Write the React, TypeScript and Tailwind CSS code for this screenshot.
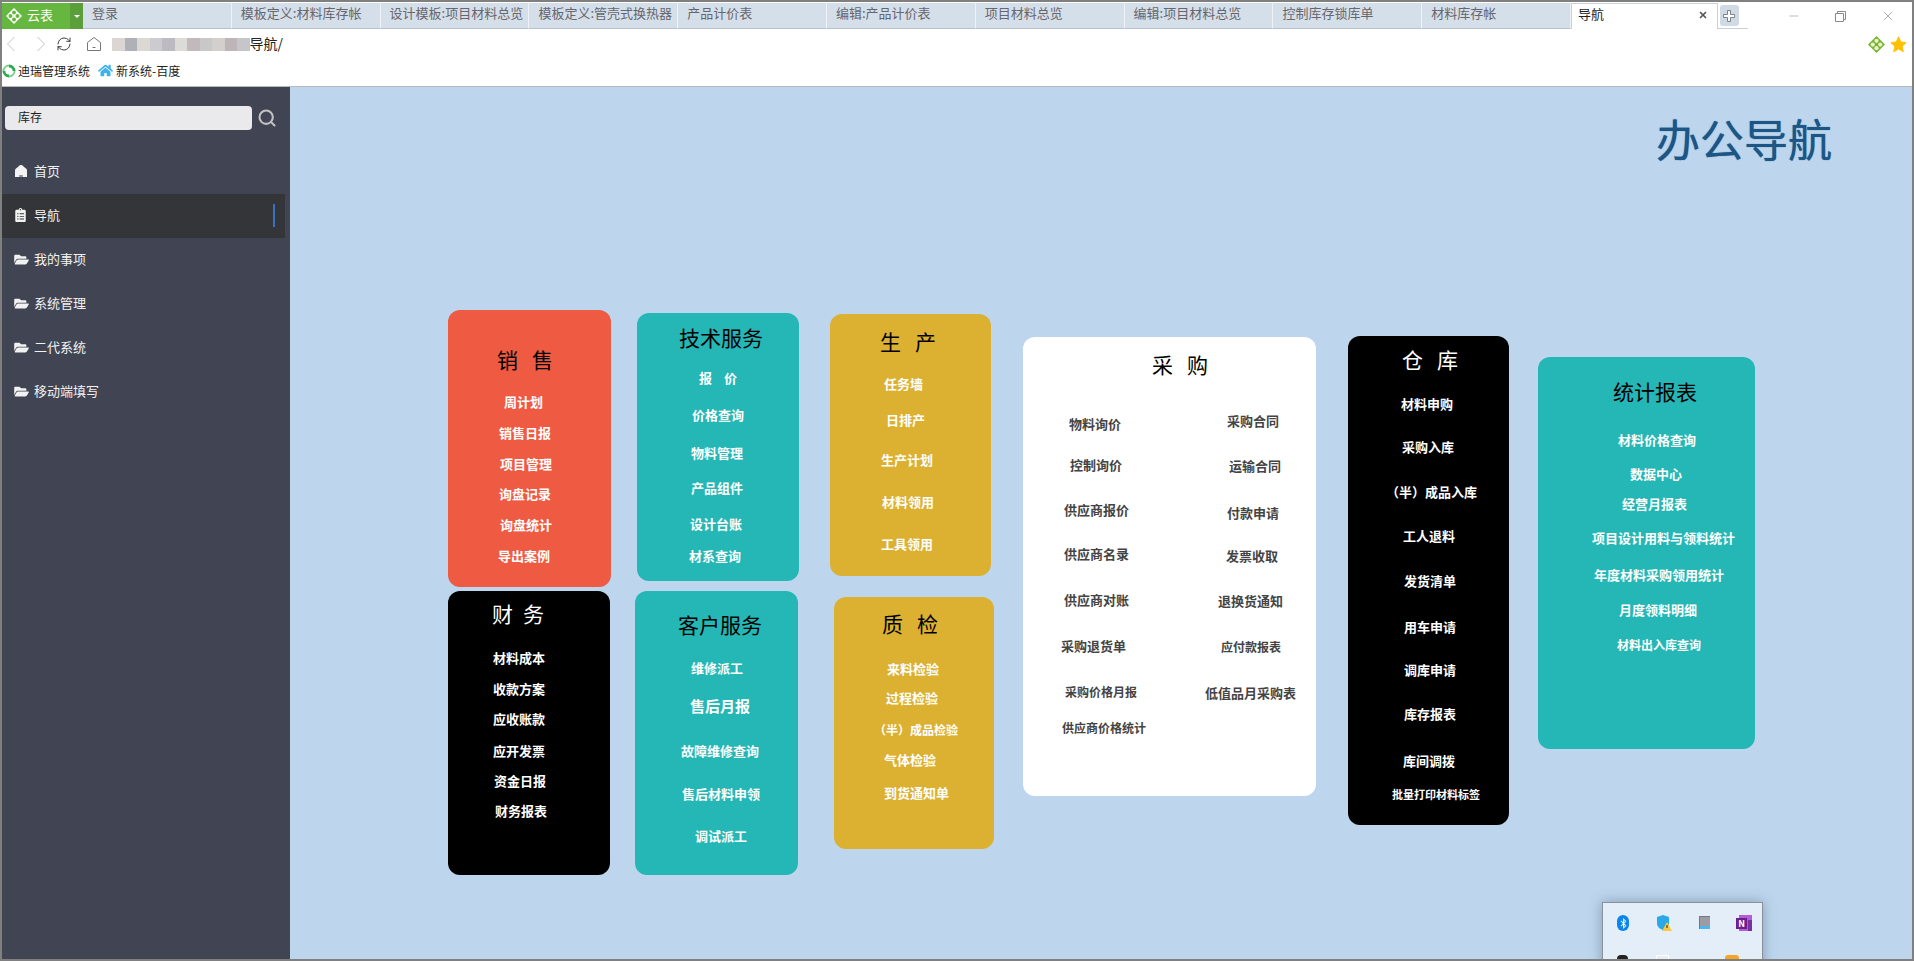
import React from "react";
import { Minus, RefreshCw, Search, X } from "lucide-react";
import { FaClipboardList, FaFolderOpen, FaHome, FaBluetoothB } from "react-icons/fa";

type Item = { t: string; c: string };

const tabs = [
  "登录",
  "模板定义:材料库存帐",
  "设计模板:项目材料总览",
  "模板定义:管壳式换热器",
  "产品计价表",
  "编辑:产品计价表",
  "项目材料总览",
  "编辑:项目材料总览",
  "控制库存锁库单",
  "材料库存帐",
];

const mosaic = [
  "bg-[#dbd6d3]",
  "bg-[#b0b0b8]",
  "bg-[#dcd8d3]",
  "bg-[#cbcbd0]",
  "bg-[#bdbac2]",
  "bg-[#dddbd8]",
  "bg-[#c2b9bd]",
  "bg-[#c9c8c8]",
  "bg-[#d2cfcd]",
  "bg-[#bdb5b8]",
  "bg-[#c6c6ca]",
];

const salesItems: Item[] = [
  { t: "周计划", c: "mt-[17px] ml-[56px]" },
  { t: "销售日报", c: "mt-[11px] ml-[51px]" },
  { t: "项目管理", c: "mt-[11px] ml-[52px]" },
  { t: "询盘记录", c: "mt-[10px] ml-[51px]" },
  { t: "询盘统计", c: "mt-[11px] ml-[52px]" },
  { t: "导出案例", c: "mt-[11px] ml-[50px]" },
];

const financeItems: Item[] = [
  { t: "材料成本", c: "mt-[19px] ml-[45px]" },
  { t: "收款方案", c: "mt-[11px] ml-[45px]" },
  { t: "应收账款", c: "mt-[10px] ml-[45px]" },
  { t: "应开发票", c: "mt-[12px] ml-[45px]" },
  { t: "资金日报", c: "mt-[10px] ml-[46px]" },
  { t: "财务报表", c: "mt-[10px] ml-[47px]" },
];

const techItems: Item[] = [
  { t: "报价", c: "mt-[15px] ml-[62px] tracking-[12px]" },
  { t: "价格查询", c: "mt-[17px] ml-[55px]" },
  { t: "物料管理", c: "mt-[18px] ml-[54px]" },
  { t: "产品组件", c: "mt-[15px] ml-[54px]" },
  { t: "设计台账", c: "mt-[16px] ml-[53px]" },
  { t: "材系查询", c: "mt-[12px] ml-[52px]" },
];

const serviceItems: Item[] = [
  { t: "维修派工", c: "mt-[18px] ml-[56px]" },
  { t: "售后月报", c: "mt-[18px] ml-[55px] text-[15px]" },
  { t: "故障维修查询", c: "mt-[25px] ml-[46px]" },
  { t: "售后材料申领", c: "mt-[23px] ml-[47px]" },
  { t: "调试派工", c: "mt-[22px] ml-[60px]" },
];

const productionItems: Item[] = [
  { t: "任务墙", c: "mt-[17px] ml-[54px]" },
  { t: "日排产", c: "mt-[16px] ml-[56px]" },
  { t: "生产计划", c: "mt-[20px] ml-[51px]" },
  { t: "材料领用", c: "mt-[22px] ml-[52px]" },
  { t: "工具领用", c: "mt-[22px] ml-[51px]" },
];

const qualityItems: Item[] = [
  { t: "来料检验", c: "mt-[20px] ml-[53px]" },
  { t: "过程检验", c: "mt-[9px] ml-[52px]" },
  { t: "（半）成品检验", c: "mt-[12px] ml-[40px] text-[12px]" },
  { t: "气体检验", c: "mt-[10px] ml-[50px]" },
  { t: "到货通知单", c: "mt-[13px] ml-[50px]" },
];

const purchaseLeft: Item[] = [
  { t: "物料询价", c: "mt-[34px] ml-[46px]" },
  { t: "控制询价", c: "mt-[21px] ml-[47px]" },
  { t: "供应商报价", c: "mt-[25px] ml-[41px]" },
  { t: "供应商名录", c: "mt-[24px] ml-[41px]" },
  { t: "供应商对账", c: "mt-[26px] ml-[41px]" },
  { t: "采购退货单", c: "mt-[26px] ml-[38px]" },
  { t: "采购价格月报", c: "mt-[26px] ml-[42px] text-[12px]" },
  { t: "供应商价格统计", c: "mt-[16px] ml-[39px] text-[12px]" },
];

const purchaseRight: Item[] = [
  { t: "采购合同", c: "mt-[31px] ml-[44px]" },
  { t: "运输合同", c: "mt-[25px] ml-[46px]" },
  { t: "付款申请", c: "mt-[27px] ml-[44px]" },
  { t: "发票收取", c: "mt-[23px] ml-[43px]" },
  { t: "退换货通知", c: "mt-[25px] ml-[35px]" },
  { t: "应付款报表", c: "mt-[26px] ml-[38px] text-[12px]" },
  { t: "低值品月采购表", c: "mt-[26px] ml-[22px]" },
];

const warehouseItems: Item[] = [
  { t: "材料申购", c: "mt-[19px] ml-[53px]" },
  { t: "采购入库", c: "mt-[23px] ml-[54px]" },
  { t: "（半）成品入库", c: "mt-[25px] ml-[38px]" },
  { t: "工人退料", c: "mt-[24px] ml-[55px]" },
  { t: "发货清单", c: "mt-[25px] ml-[56px]" },
  { t: "用车申请", c: "mt-[26px] ml-[56px]" },
  { t: "调库申请", c: "mt-[23px] ml-[56px]" },
  { t: "库存报表", c: "mt-[24px] ml-[56px]" },
  { t: "库间调拨", c: "mt-[27px] ml-[55px]" },
  { t: "批量打印材料标签", c: "mt-[14px] ml-[44px] text-[11px]" },
];

const statsItems: Item[] = [
  { t: "材料价格查询", c: "mt-[23px] ml-[80px]" },
  { t: "数据中心", c: "mt-[14px] ml-[92px]" },
  { t: "经营月报表", c: "mt-[10px] ml-[84px]" },
  { t: "项目设计用料与领料统计", c: "mt-[14px] ml-[54px]" },
  { t: "年度材料采购领用统计", c: "mt-[17px] ml-[56px]" },
  { t: "月度领料明细", c: "mt-[15px] ml-[81px]" },
  { t: "材料出入库查询", c: "mt-[15px] ml-[79px] text-[12px]" },
];

const navItems = [
  { t: "首页", icon: "home" },
  { t: "导航", icon: "list", active: true },
  { t: "我的事项", icon: "folder" },
  { t: "系统管理", icon: "folder" },
  { t: "二代系统", icon: "folder" },
  { t: "移动端填写", icon: "folder" },
];

function Diamond({ className, color, dot }: { className: string; color: string; dot: string }) {
  return (
    <svg viewBox="0 0 20 20" className={className}>
      <path d="M10 0 L20 10 L10 20 L0 10 Z" fill={color} />
      <circle cx="10" cy="5.6" r="2.5" fill={dot} />
      <circle cx="10" cy="14.4" r="2.5" fill={dot} />
      <circle cx="5.6" cy="10" r="2.5" fill={dot} />
      <circle cx="14.4" cy="10" r="2.5" fill={dot} />
    </svg>
  );
}

function Lines({ items }: { items: Item[] }) {
  return (
    <>
      {items.map((item) => (
        <div key={item.t} className={`h-[20px] leading-[19px] whitespace-nowrap font-bold ${item.c}`}>
          {item.t}
        </div>
      ))}
    </>
  );
}

function Title({ text, className }: { text: string; className: string }) {
  return <div className={`h-[28px] leading-[24px] text-[21px] font-normal whitespace-nowrap ${className}`}>{text}</div>;
}

function NavIcon({ name }: { name: string }) {
  if (name === "home") {
    return (
      <svg viewBox="0 0 14 14" className="w-[14px] h-[14px]">
        <path d="M1 13 V6.5 C1 5.6 1.4 5 2 4.5 L6 1.3 C6.6 0.9 7.4 0.9 8 1.3 L12 4.5 C12.6 5 13 5.6 13 6.5 V13 Z" fill="#f4f4f4" />
        <path d="M5.2 11 H8.8 V13 H5.2 Z" fill="#8f929c" />
      </svg>
    );
  }
  if (name === "list") return <FaClipboardList className="w-[13px] h-[14px]" />;
  return <FaFolderOpen className="w-[15px] h-[13px]" />;
}

export default function App() {
  return (
    <div className="w-[1914px] h-[961px] overflow-hidden relative flex flex-col border-2 border-[#808080] bg-white font-['Noto_Sans_CJK_SC','Liberation_Sans',sans-serif]">
      {/* tab strip */}
      <div className="h-[26px] flex shrink-0 items-stretch mt-px">
        <div className="w-[68px] bg-[#66b73f] flex items-center text-white text-[13px] pb-[3px]">
          <Diamond className="w-[16px] h-[16px] ml-[4px] mr-[5px] mt-[3px]" color="#ffffff" dot="#66b73f" />
          云表
        </div>
        <div className="w-[13px] bg-[#5a9f3a] flex items-center justify-center">
          <div className="border-x-[3px] border-x-transparent border-t-[3px] border-t-white" />
        </div>
        {tabs.map((tab) => (
          <div
            key={tab}
            className="w-[148.8px] bg-[#d5dfe9] border-b border-b-[#b4c2d2] border-r border-r-[#eef2f6] pl-[9px] pr-[2px] text-[13px] leading-[20px] text-[#66666e] whitespace-nowrap overflow-hidden"
          >
            {tab}
          </div>
        ))}
        <div className="w-[147px] flex items-start justify-between pl-[6px] pr-[9px] text-[13px] leading-[20px] text-[#222222] border-x border-t border-[#c8d2dc]">
          导航
          <X className="w-[10px] h-[10px] text-[#555555] mt-[6px]" strokeWidth={4} />
        </div>
        <div className="w-[30px] border-b border-b-[#c8d2dc] pl-[2px] pt-[2px]">
          <div className="w-[19px] h-[21px] bg-[#cfdae4] rounded-[3px] flex items-center justify-center">
            <svg viewBox="0 0 12 12" className="w-[12px] h-[12px]">
              <path d="M4.5 0.5 H7.5 V4.5 H11.5 V7.5 H7.5 V11.5 H4.5 V7.5 H0.5 V4.5 H4.5 Z" fill="#ffffff" stroke="#7d8389" strokeWidth="1" />
            </svg>
          </div>
        </div>
        <div className="flex-1 flex items-center justify-end pr-[16px] gap-[34px] text-[#8a8a8a]">
          <Minus className="w-[14px] h-[14px]" strokeWidth={1} />
          <svg viewBox="0 0 11 11" className="w-[11px] h-[11px]">
            <path d="M0.5 2.5 H8.5 V10.5 H0.5 Z M2.5 2.5 V0.5 H10.5 V8.5 H8.5" fill="none" stroke="#8a8a8a" strokeWidth="1" />
          </svg>
          <X className="w-[16px] h-[16px]" strokeWidth={1} />
        </div>
      </div>

      {/* address bar */}
      <div className="h-[30px] flex shrink-0 items-center pl-px pr-[5px] text-[#222222]">
        <svg viewBox="0 0 16 16" className="w-[16px] h-[16px]">
          <path d="M11.5 1 L4.5 8 L11.5 15" fill="none" stroke="#c4c4c4" strokeWidth="1" />
        </svg>
        <svg viewBox="0 0 16 16" className="w-[16px] h-[16px] ml-[14px]">
          <path d="M4.5 1 L11.5 8 L4.5 15" fill="none" stroke="#c4c4c4" strokeWidth="1" />
        </svg>
        <RefreshCw className="w-[16px] h-[16px] text-[#333333] ml-[7px]" strokeWidth={1.4} />
        <svg viewBox="0 0 16 16" className="w-[16px] h-[16px] ml-[14px]">
          <path d="M1.5 6.5 L8 1.5 L14.5 6.5 V14.5 H1.5 Z" fill="none" stroke="#777777" strokeWidth="1" />
          <path d="M6.5 11.5 H9.5" stroke="#777777" strokeWidth="1" />
        </svg>
        <div className="flex h-[13px] ml-[10px]">
          {mosaic.map((c, i) => (
            <div key={i} className={`w-[12.5px] h-full ${c}`} />
          ))}
        </div>
        <span className="text-[14px] pb-[2px]">导航/</span>
        <div className="flex-1" />
        <Diamond className="w-[17px] h-[17px]" color="#7ab32e" dot="#e8f2cf" />
        <svg viewBox="0 0 20 20" className="w-[17px] h-[17px] ml-[5px]">
          <path d="M10 1 L12.8 7 L19 7.8 L14.4 12.1 L15.7 18.6 L10 15.3 L4.3 18.6 L5.6 12.1 L1 7.8 L7.2 7 Z" fill="#ffc000" stroke="#ffc000" strokeLinejoin="round" />
        </svg>
      </div>

      {/* bookmarks */}
      <div className="h-[28px] flex shrink-0 items-center border-b border-b-[#b9b9b9] pb-[4px] text-[12px] text-[#222222]">
        <svg viewBox="0 0 14 14" className="w-[14px] h-[14px]">
          <path d="M7 0.5 A6.5 6.5 0 0 1 13.5 7 L10.6 7 A3.6 3.6 0 0 0 7 3.4 Z" fill="#2fa84f" />
          <path d="M7 13.5 A6.5 6.5 0 0 1 0.5 7 L3.4 7 A3.6 3.6 0 0 0 7 10.6 Z" fill="#2fa84f" />
          <path d="M0.5 7 A6.5 6.5 0 0 1 7 0.5 L7 2.4 A4.6 4.6 0 0 0 2.4 7 Z" fill="#7ccf8c" />
          <path d="M13.5 7 A6.5 6.5 0 0 1 7 13.5 L7 11.6 A4.6 4.6 0 0 0 11.6 7 Z" fill="#7ccf8c" />
        </svg>
        <span className="ml-[2px]">迪瑞管理系统</span>
        <FaHome className="w-[15px] h-[15px] text-[#3db2ee] ml-[8px]" />
        <span className="ml-[3px]">新系统-百度</span>
      </div>

      <div className="flex flex-1 min-h-0">
        {/* sidebar */}
        <aside className="w-[288px] bg-[#414553] shrink-0 text-[13px] text-[#f2f2f2]">
          <div className="flex items-center pt-[19px] pl-[3px]">
            <div className="w-[247px] h-[24px] rounded-[4px] bg-[#eaeaec] text-[#222222] text-[12px] leading-[22px] pl-[13px]">库存</div>
            <Search className="w-[20px] h-[20px] ml-[5px] text-[#c2c2c2]" strokeWidth={2.5} />
          </div>
          <nav className="mt-[20px]">
            {navItems.map((nav) => (
              <div
                key={nav.t}
                className={nav.active ? "h-[44px] w-[283px] bg-[#343539] flex items-center pl-[12px] pb-[2px] relative" : "h-[44px] w-[283px] flex items-center pl-[12px] pb-[2px] relative"}
              >
                <span className="w-[20px] flex justify-start">
                  <NavIcon name={nav.icon} />
                </span>
                {nav.t}
                {nav.active && <span className="absolute right-[10px] top-[10px] w-[2px] h-[23px] bg-[#3b6fc0]" />}
              </div>
            ))}
          </nav>
        </aside>

        {/* canvas */}
        <main className="flex-1 bg-[#bdd6ed] flex flex-col text-[13px]">
          <div className="mt-[20px] h-[63px] pb-[2px] pr-[80px] flex justify-end items-center text-[44px] font-normal text-[#1d5585] [text-shadow:0_0_1px_#1f5c8f]">办公导航</div>
          <div className="flex items-start pl-[158px]">
            <div className="w-[163px] flex flex-col">
              <section className="mt-[140px] w-[163px] h-[277px] rounded-[12px] bg-[#ef5a42] text-white">
                <Title text="销售" className="mt-[37px] ml-[49px] tracking-[14px] text-black" />
                <Lines items={salesItems} />
              </section>
              <section className="mt-[4px] w-[162px] h-[284px] rounded-[12px] bg-black text-white">
                <Title text="财务" className="pt-[10px] h-[38px] ml-[44px] tracking-[10px]" />
                <Lines items={financeItems} />
              </section>
            </div>

            <div className="ml-[24px] w-[164px] flex flex-col">
              <section className="mt-[143px] ml-[2px] w-[162px] h-[268px] rounded-[12px] bg-[#25b7b6] text-white">
                <Title text="技术服务" className="pt-[12px] h-[40px] ml-[42px] text-black" />
                <Lines items={techItems} />
              </section>
              <section className="mt-[10px] w-[163px] h-[284px] rounded-[12px] bg-[#25b7b6] text-white">
                <Title text="客户服务" className="pt-[21px] h-[49px] ml-[43px] text-black" />
                <Lines items={serviceItems} />
              </section>
            </div>

            <div className="ml-[31px] w-[164px] flex flex-col">
              <section className="mt-[144px] w-[161px] h-[262px] rounded-[12px] bg-[#dcb131] text-white">
                <Title text="生产" className="pt-[15px] h-[43px] ml-[50px] tracking-[14px] text-black" />
                <Lines items={productionItems} />
              </section>
              <section className="mt-[21px] ml-[4px] w-[160px] h-[252px] rounded-[12px] bg-[#dcb131] text-white">
                <Title text="质检" className="pt-[14px] h-[42px] ml-[48px] tracking-[14px] text-black" />
                <Lines items={qualityItems} />
              </section>
            </div>

            <section className="ml-[29px] mt-[167px] w-[293px] h-[459px] rounded-[12px] bg-white text-[#444444]">
              <Title text="采购" className="pt-[15px] h-[43px] ml-[129px] tracking-[14px] text-black" />
              <div className="flex">
                <div className="w-[160px]">
                  <Lines items={purchaseLeft} />
                </div>
                <div>
                  <Lines items={purchaseRight} />
                </div>
              </div>
            </section>

            <section className="ml-[32px] mt-[166px] w-[161px] h-[489px] rounded-[12px] bg-black text-white">
              <Title text="仓库" className="pt-[11px] h-[39px] ml-[54px] tracking-[14px]" />
              <Lines items={warehouseItems} />
            </section>

            <section className="ml-[29px] mt-[187px] w-[217px] h-[392px] rounded-[12px] bg-[#25b7b6] text-white">
              <Title text="统计报表" className="pt-[22px] h-[50px] ml-[75px] text-black" />
              <Lines items={statsItems} />
            </section>
          </div>
        </main>
      </div>

      {/* tray popup over the canvas */}
      <div className="absolute left-[1600px] top-[900px] w-[161px] h-[70px] bg-[#e4eef8] border border-[#8a9299] shadow-[0_0_12px_rgba(60,80,110,0.45)]">
        <div className="flex pt-[12px] pl-[14px]">
          <div className="w-[12px] h-[16px] rounded-[6px] bg-[#0a84ee] flex items-center justify-center">
            <FaBluetoothB className="w-[9px] h-[11px] text-white" />
          </div>
          <svg viewBox="0 0 16 16" className="w-[16px] h-[16px] ml-[27px]">
            <path d="M1 2 L7 0 L13 2 V8 C13 12 9 14 7 15 C4 14 1 12 1 8 Z" fill="#2aa8e8" />
            <path d="M11 7 L16 16 H6 Z" fill="#ffc83d" />
            <path d="M11 10 V13" stroke="#222222" strokeWidth="1" />
          </svg>
          <div className="w-[11px] h-[13px] ml-[27px] mt-px bg-[#9a9da3] border-l border-t border-[#777777] flex flex-col justify-end">
            <div className="h-[3px] bg-[#4db5f0]" />
          </div>
          <div className="w-[16px] h-[16px] ml-[26px] relative">
            <div className="absolute right-0 top-0 w-[13px] h-[16px] bg-[#b25cd6]" />
            <div className="absolute right-0 top-[5px] w-[4px] h-[11px] bg-[#7a2ea6]" />
            <span className="absolute left-0 top-[3px] w-[11px] h-[11px] bg-[#6b1e90] text-white text-[9px] leading-[11px] font-bold text-center">N</span>
          </div>
        </div>
        <div className="flex pt-[24px] pl-[14px]">
          <div className="w-[11px] h-[6px] bg-[#222222] rounded-t-[4px]" />
          <div className="w-[13px] h-[6px] ml-[28px] border border-white" />
          <div className="w-[14px] h-[6px] ml-[56px] bg-[#f5a623] rounded-t-[3px]" />
        </div>
      </div>
    </div>
  );
}
